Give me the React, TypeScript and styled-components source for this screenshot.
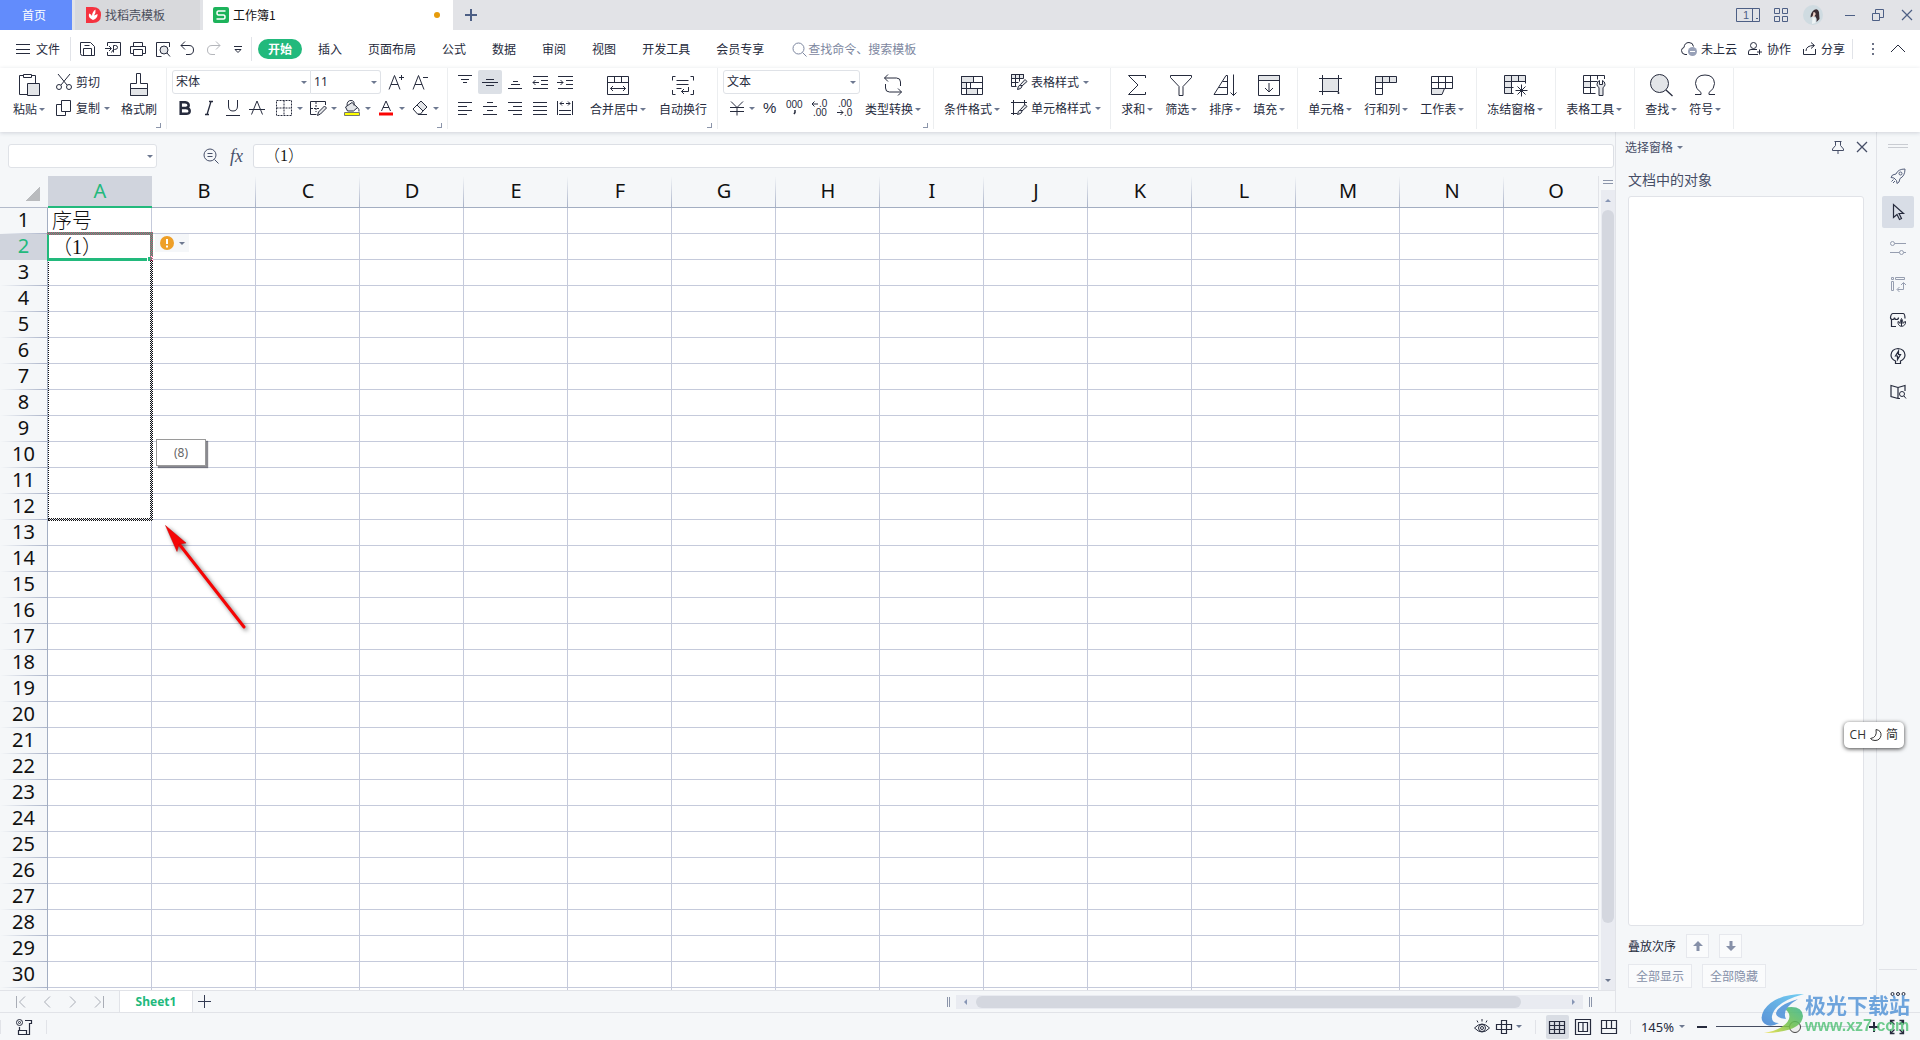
import React from 'react';
import styled, { createGlobalStyle, css } from 'styled-components';

const ink = '#262b3d';
const shade = '#e3e5e8';
const muted = '#8690a8';
const line = '#e1e3e8';
const green = '#22b97c';
const surface = '#f5f7f9';
const sans = '"Noto Sans", "Noto Sans CJK SC", sans-serif';
const cjk = '"Noto Sans CJK SC", "Noto Sans", sans-serif';

const GlobalStyle = createGlobalStyle`
  *, *::before, *::after { box-sizing: border-box; }
  body { margin: 0; font: 12px/16px ${cjk}; color: ${ink}; background: ${surface}; overflow: hidden; }
  button, input, select { font: inherit; color: inherit; margin: 0; padding: 0; border: 0; background: none; border-radius: 0; outline: none; }
  button { white-space: nowrap; }
  svg { display: block; flex: none; }
`;

/* ---------- primitives ---------- */

const Svg = styled.svg`
  fill: none;
  stroke: currentColor;
  stroke-width: 1;
  overflow: visible;
`;

type IconProps = { w?: number; h?: number; children: React.ReactNode };
const Icon = ({ w = 16, h, children }: IconProps) => (
  <Svg width={w} height={h ?? w} viewBox={`0 0 ${w} ${h ?? w}`} aria-hidden="true">{children}</Svg>
);

const Caret = styled.span<{ $dir?: 'up' | 'down' | 'left' | 'right' }>`
  flex: none;
  width: 0;
  height: 0;
  border: 3px solid transparent;
  ${({ $dir = 'down' }) =>
    ({
      down: css`border-top-color: #6d7890; border-bottom-width: 0;`,
      up: css`border-bottom-color: #8796b5; border-top-width: 0;`,
      left: css`border-right-color: #8796b5; border-left-width: 0;`,
      right: css`border-left-color: #8796b5; border-right-width: 0;`,
    })[$dir]}
`;

const Spacer = styled.div`flex: 1;`;

const Rule = styled.span<{ $h?: number; $mx?: number }>`
  flex: none;
  width: 1px;
  height: ${({ $h = 20 }) => $h}px;
  margin: 0 ${({ $mx = 0 }) => $mx}px;
  background: ${line};
`;

/* ---------- shell ---------- */

const Shell = styled.div`
  position: relative;
  display: flex;
  flex-direction: column;
  height: 100vh;
`;

/* ---------- title bar ---------- */

const TitleBar = styled.header`
  display: flex;
  align-items: center;
  gap: 3px;
  height: 30px;
  background: #e2e3e7;
`;

const HomeTab = styled.button`
  width: 72px;
  height: 30px;
  padding-right: 4px;
  color: #fff;
  background: #628cfc;
`;

const DocTab = styled.button<{ $active?: boolean }>`
  display: flex;
  align-items: center;
  gap: 4px;
  width: ${({ $active }) => ($active ? 250 : 125)}px;
  height: 30px;
  padding: 0 13px 0 10px;
  color: ${({ $active }) => ($active ? '#111' : '#4b4f5c')};
  background: ${({ $active }) => ($active ? '#fff' : '#d8d9dc')};
`;

const Dirty = styled.span`
  width: 6px;
  height: 6px;
  border-radius: 50%;
  background: #e69b0b;
`;

const TitleButton = styled.button<{ $w: number }>`
  display: flex;
  align-items: center;
  justify-content: center;
  width: ${({ $w }) => $w}px;
  height: 30px;
  color: #4d5f85;
`;

/* ---------- menu row ---------- */

const MenuRow = styled.nav`
  display: flex;
  align-items: center;
  height: 38px;
  padding: 0 10px 0 16px;
  background: #fff;
`;

const FileButton = styled.button`
  display: flex;
  align-items: center;
  gap: 6px;
  margin-right: 10px;
`;

const QuickTools = styled.div`
  display: flex;
  align-items: center;
  width: 180px;
  padding-left: 4px;
`;

const QuickButton = styled.button<{ $dim?: boolean }>`
  display: flex;
  align-items: center;
  justify-content: center;
  width: 25px;
  height: 24px;
  color: ${({ $dim }) => ($dim ? '#b4b6bb' : ink)};
`;

const StartTab = styled.button`
  height: 20px;
  margin: 0 3px 0 6px;
  padding: 0 10px;
  border-radius: 10px;
  color: #fff;
  font-weight: 700;
  background: ${green};
`;

const MenuTab = styled.button`padding: 0 13px;`;

const SearchBox = styled.label`
  display: flex;
  align-items: center;
  gap: 1px;
  margin-left: 15px;
  color: #7d87a0;
  input { width: 140px; height: 20px; padding-bottom: 2px; }
  input::placeholder { color: #7d87a0; opacity: 1; }
`;

const MenuAction = styled.button`
  display: flex;
  align-items: center;
  gap: 4px;
  margin-left: 10px;
`;

/* ---------- ribbon ---------- */

const Ribbon = styled.section`
  position: relative;
  z-index: 5;
  display: flex;
  height: 64px;
  padding-bottom: 3px;
  background: #fff;
  box-shadow: 0 1px 4px rgba(40, 50, 80, 0.18);
`;

const Group = styled.div<{ $launcher?: boolean; $pl?: number; $pr?: number; $gap?: number }>`
  position: relative;
  display: flex;
  gap: ${({ $gap = 12 }) => $gap}px;
  padding: 0 ${({ $pr = 12 }) => $pr}px 0 ${({ $pl = 10 }) => $pl}px;
  border-right: 1px solid #eceef0;
  ${({ $launcher }) =>
    $launcher &&
    css`
      &::after {
        content: '';
        position: absolute;
        right: 5px;
        bottom: 1px;
        width: 5px;
        height: 5px;
        border: solid #8b95aa;
        border-width: 0 1px 1px 0;
      }
    `}
`;

const BigButton = styled.button`
  display: flex;
  flex-direction: column;
  align-items: center;
  gap: 4px;
  padding-top: 5px;
`;

const Label = styled.span`
  display: flex;
  align-items: center;
  gap: 2px;
`;

const Stack = styled.div`
  display: flex;
  flex-direction: column;
  gap: 2px;
  padding-top: 2px;
`;

const Row = styled.div<{ $gap?: number; $pl?: number }>`
  display: flex;
  align-items: center;
  gap: ${({ $gap = 0 }) => $gap}px;
  height: 24px;
  padding-left: ${({ $pl = 0 }) => $pl}px;
`;

const TextButton = styled.button`
  display: flex;
  align-items: center;
  gap: 4px;
  height: 24px;
`;

const IconButton = styled.button<{ $on?: boolean }>`
  display: flex;
  align-items: center;
  justify-content: center;
  width: 24px;
  height: 24px;
  border-radius: 2px;
  background: ${({ $on }) => ($on ? '#dce0e6' : 'transparent')};
`;

const SplitButton = styled.button`
  display: flex;
  align-items: center;
  gap: 5px;
  width: 34px;
  height: 24px;
  padding-left: 7px;
`;

const SelectBox = styled.span<{ $w: number; $join?: 'left' | 'right' }>`
  display: flex;
  align-items: center;
  width: ${({ $w }) => $w}px;
  height: 24px;
  padding-right: 3px;
  border: 1px solid #dfe2e7;
  border-radius: ${({ $join }) => ($join === 'left' ? '3px 0 0 3px' : $join === 'right' ? '0 3px 3px 0' : '3px')};
  ${({ $join }) => $join === 'right' && css`border-left: 0;`}
  background: #fff;
  select, input { flex: 1; min-width: 0; height: 22px; padding-left: 3px; appearance: none; font-family: ${sans}; }
`;

const Glyph = styled.text`
  fill: currentColor;
  stroke: none;
  font-family: "Liberation Sans", sans-serif;
`;

/* ---------- workspace ---------- */

const Workspace = styled.main`
  display: flex;
  flex: 1;
  min-height: 0;
`;

const Editor = styled.section`
  display: flex;
  flex: 1;
  flex-direction: column;
  min-width: 0;
`;

const FormulaRow = styled.div`
  display: flex;
  align-items: center;
  height: 44px;
  padding: 4px 1px 0 8px;
  color: #47506a;
`;

const FormulaTools = styled.div`
  display: flex;
  align-items: center;
  justify-content: flex-end;
  gap: 11px;
  width: 96px;
  padding-right: 10px;
`;

const Fx = styled.button`
  font: italic 18px/20px "Liberation Serif", serif;
`;

const FormulaInput = styled.input`
  flex: 1;
  min-width: 0;
  height: 24px;
  padding: 0 0 4px 10px;
  border: 1px solid #dcdfe5;
  border-radius: 3px;
  color: #111;
  font: 300 16px/20px "Liberation Serif", "Noto Sans CJK SC", serif;
  background: #fff;
`;

const GridArea = styled.div`
  display: flex;
  flex: 1;
  min-height: 0;
`;

const Viewport = styled.div`
  position: relative;
  flex: 1;
  min-width: 0;
  overflow: hidden;
`;

const Sheet = styled.table`
  width: 1608px;
  table-layout: fixed;
  border-spacing: 0;
  font: 20px/23px ${sans};
  color: #111;
`;

const Corner = styled.th`
  width: 48px;
  height: 32px;
  padding: 0;
  border-bottom: 1px solid #b3bbcb;
`;

const CornerMark = styled.div`
  margin: 4px 0 0 25px;
  width: 15px;
  height: 15px;
  background: linear-gradient(135deg, transparent 50%, #b9bbbe 50%);
`;

const ColHead = styled.th<{ $on?: boolean }>`
  width: 104px;
  height: 32px;
  padding: 0 0 2px;
  font-weight: 400;
  border-bottom: 1px solid #a3aec2;
  background: linear-gradient(transparent, #a9b2c8) right / 1px 100% no-repeat;
  ${({ $on }) => $on && css`color: ${green}; background: #d0d4dd; border-bottom: 2px solid ${green};`}
`;

const RowHead = styled.th<{ $on?: boolean }>`
  height: 26px;
  padding: 0;
  font-weight: 400;
  vertical-align: top;
  border-right: 1px solid #a3aec2;
  background: linear-gradient(90deg, transparent, #a9b2c8) bottom / 100% 1px no-repeat;
  ${({ $on }) => $on && css`color: ${green}; background: #d0d4dd;`}
`;

const Cell = styled.td`
  position: relative;
  height: 26px;
  padding: 2px 0 0 4px;
  white-space: nowrap;
  font: 300 20px/23px "Liberation Serif", "Noto Sans CJK SC", serif;
  border: solid #c5cadb;
  border-width: 0 1px 1px 0;
  background: #fff;
`;

const Selected = styled.div`
  position: absolute;
  z-index: 2;
  left: -1px;
  top: -2px;
  width: 106px;
  height: 29px;
  border: solid ${green};
  border-width: 3px 3px 3px 2px;
  &::after {
    content: '';
    position: absolute;
    right: -3px;
    bottom: -4px;
    width: 6px;
    height: 6px;
    border: 1px solid #fff;
    background: ${green};
  }
`;

const checker = (a: string) => css`
  background-image: repeating-conic-gradient(${a} 0 25%, transparent 0 50%);
  background-size: 2px 2px;
`;

const FillRange = styled.div`
  position: absolute;
  z-index: 3;
  left: 0;
  top: -2px;
  width: 105px;
  height: 289px;
  &::before, &::after { content: ''; position: absolute; ${checker('#111')} }
  &::before { right: 0; top: 28px; bottom: 3px; width: 3px; }
  &::after { left: 0; right: 0; bottom: 0; height: 3px; }
`;

const FillEdge = styled.div`
  position: absolute;
  z-index: 3;
  left: 0;
  top: 27px;
  width: 1px;
  height: 260px;
  ${checker('#111')}
`;

const FillSource = styled.div`
  position: absolute;
  z-index: 3;
  left: -1px;
  top: -2px;
  width: 106px;
  height: 29px;
  &::before, &::after { content: ''; position: absolute; ${checker('#e03c78')} }
  &::before { left: 0; right: 0; top: 0; height: 3px; }
  &::after { right: 0; top: 3px; bottom: 0; width: 3px; }
`;

const ErrorMenu = styled.button`
  position: absolute;
  z-index: 2;
  left: 3px;
  top: 0;
  display: flex;
  align-items: center;
  gap: 5px;
  height: 18px;
  padding: 0 4px 0 5px;
  background: ${surface};
`;

const FillTip = styled.div`
  position: absolute;
  z-index: 2;
  left: 4px;
  top: -3px;
  width: 50px;
  height: 27px;
  border: 1px solid #9a9a9a;
  color: #666;
  font: 12px/25px ${sans};
  text-align: center;
  background: #fff;
  box-shadow: 2px 2px 1px rgba(60, 60, 70, 0.6);
`;

const Pointer = styled.div`
  position: absolute;
  z-index: 4;
  left: 160px;
  top: 344px;
  filter: drop-shadow(2px 2px 2px rgba(0, 0, 0, 0.55));
`;

const VScroll = styled.div`
  display: flex;
  flex-direction: column;
  width: 17px;
  padding-left: 2px;
  border-left: 1px solid ${line};
`;

const VSplit = styled.div`
  width: 10px;
  height: 4px;
  margin: 4px 0 6px 2px;
  border: solid #8b95aa;
  border-width: 1px 0;
`;

const VTrack = styled.div`
  display: flex;
  flex: 1;
  flex-direction: column;
  align-items: center;
  background: #e9ebf1;
`;

const ScrollArrow = styled.button<{ $vertical?: boolean }>`
  display: flex;
  flex: none;
  align-items: center;
  justify-content: center;
  width: ${({ $vertical }) => ($vertical ? 14 : 20)}px;
  height: ${({ $vertical }) => ($vertical ? 20 : 14)}px;
`;

const Thumb = styled.div<{ $share: number; $vertical?: boolean }>`
  flex: ${({ $share }) => $share};
  ${({ $vertical }) => ($vertical ? css`width: 12px;` : css`height: 12px;`)}
  border-radius: 6px;
  background: #d4d7df;
`;

/* ---------- sheet tabs ---------- */

const SheetBar = styled.div`
  display: flex;
  align-items: center;
  height: 22px;
  padding: 0 23px 0 8px;
  border-top: 1px solid ${line};
`;

const NavButton = styled.button`
  display: flex;
  align-items: center;
  justify-content: center;
  width: 26px;
  height: 20px;
  color: #a9adb6;
`;

const SheetTab = styled.button`
  width: 74px;
  height: 21px;
  margin: 0 2px 0 7px;
  border: solid ${line};
  border-width: 0 1px;
  color: ${green};
  font: 700 12px/20px ${sans};
  background: #fff;
`;

const AddSheet = styled(NavButton)`
  width: 18px;
  color: #333a52;
`;

const HScroll = styled.div`
  display: flex;
  flex: none;
  width: calc(41% - 4px);
  align-items: center;
  justify-content: space-between;
  gap: 6px;
`;

const HSplit = styled.span`
  width: 3px;
  height: 10px;
  border: solid #8b95aa;
  border-width: 0 1px;
`;

const HTrack = styled.div`
  display: flex;
  flex: 1;
  align-items: center;
  height: 14px;
  background: #e9ebf1;
`;

/* ---------- selection pane ---------- */

const Pane = styled.aside`
  display: flex;
  flex-direction: column;
  width: 261px;
  padding: 7px 12px 24px;
  border-left: 1px solid ${line};
`;

const PaneHead = styled.div`
  display: flex;
  align-items: center;
  gap: 12px;
  height: 16px;
  margin: 0 -3px;
  color: #454d66;
`;

const PaneTitle = styled.h2`
  margin: 9px 0 7px;
  padding-top: 5px;
  font: 400 14px/20px ${cjk};
  color: #454d66;
`;

const PlainButton = styled.button`
  display: flex;
  align-items: center;
  gap: 4px;
`;

const ObjectList = styled.div`
  flex: 1;
  margin-bottom: 8px;
  border: 1px solid ${line};
  border-radius: 3px;
  background: #fff;
`;

const OrderRow = styled.div<{ $mb?: number }>`
  display: flex;
  align-items: center;
  gap: 10px;
  margin-bottom: ${({ $mb = 0 }) => $mb}px;
`;

const PaneButton = styled.button<{ $w: number }>`
  display: flex;
  align-items: center;
  justify-content: center;
  width: ${({ $w }) => $w}px;
  height: 24px;
  border: 1px solid #e6e8ed;
  color: ${muted};
  background: #fafbfc;
`;

const ToolRail = styled.aside`
  display: flex;
  flex-direction: column;
  align-items: center;
  width: 44px;
  padding: 12px 2px 15px 0;
  border-left: 1px solid ${line};
`;

const Grip = styled.span`
  width: 20px;
  height: 4px;
  margin-bottom: 12px;
  border: solid #c9ccd2;
  border-width: 1px 0;
`;

const RailButton = styled.button<{ $on?: boolean; $tone?: string }>`
  display: flex;
  align-items: center;
  justify-content: center;
  width: 32px;
  height: 32px;
  margin-bottom: 4px;
  border-radius: 2px;
  color: ${({ $tone = ink }) => $tone};
  background: ${({ $on }) => ($on ? '#d8dde6' : 'transparent')};
`;

const RailRule = styled.span`
  width: 38px;
  height: 1px;
  margin-bottom: 21px;
  background: ${line};
`;

/* ---------- status bar ---------- */

const StatusBar = styled.footer`
  display: flex;
  align-items: center;
  height: 28px;
  padding: 0 11px 0 0;
  border-top: 1px solid ${line};
`;

const StatusButton = styled.button<{ $w: number; $on?: boolean }>`
  display: flex;
  align-items: center;
  justify-content: center;
  gap: 4px;
  width: ${({ $w }) => $w}px;
  height: 24px;
  border-radius: 2px;
  background: ${({ $on }) => ($on ? '#d9dde4' : 'transparent')};
`;

const Views = styled.div`
  display: flex;
  gap: 3px;
  margin-right: 9px;
`;

const ZoomLabel = styled.button`
  display: flex;
  align-items: center;
  gap: 5px;
  margin: 0 7px 0 10px;
  font: 13px/16px ${sans};
`;

const ZoomSlider = styled.input`
  appearance: none;
  width: 144px;
  height: 14px;
  margin: 0 4px;
  background: linear-gradient(90deg, #454c60 55%, #c9cdd6 55%) center / 100% 1px no-repeat;
  &::-webkit-slider-thumb {
    appearance: none;
    width: 12px;
    height: 12px;
    border: 1px solid #444;
    border-radius: 50%;
    background: #eee;
  }
`;

/* ---------- floating layers ---------- */

const ImeBadge = styled.div`
  position: absolute;
  z-index: 8;
  right: 16px;
  bottom: 292px;
  display: flex;
  align-items: center;
  gap: 4px;
  height: 26px;
  padding: 0 6px;
  border-radius: 5px;
  color: #333;
  font: 12px/16px "Open Sans", "Noto Sans CJK SC", sans-serif;
  background: #fff;
  box-shadow: 0 1px 4px rgba(0, 0, 0, 0.75);
`;

const SiteMark = styled.div`
  position: absolute;
  z-index: 9;
  right: 10px;
  bottom: 4px;
  display: flex;
  align-items: center;
  opacity: 0.85;
  pointer-events: none;
`;

const SiteText = styled.div`
  display: flex;
  flex-direction: column;
  color: #5796d8;
  font: 700 21px/24px ${cjk};
`;

const SiteUrl = styled.span`
  color: #58c47c;
  font: 700 16px/20px "Liberation Sans", sans-serif;
`;

/* ---------- large ribbon icons ---------- */

const PasteIcon = () => (
  <Icon w={24}><path d="M10.5 21.5h-8v-19h4M14.5 2.5h4v8" /><path d="M6.5 1.5h8v3h-8z" /><path fill={shade} d="M10.5 10.5h12v12h-12z" /></Icon>
);
const BrushIcon = () => (
  <Icon w={24}><path d="M9.5.5h4v10h7v12h-17v-12h6z" /><path fill={shade} d="M3.5 15.5h17v7h-17z" /></Icon>
);
const MergeIcon = () => (
  <Icon w={24}><path d="M1.5 3.5h21v18h-21zM1.5 9.5h21M8.5 3.5v6M15.5 3.5v6M4.5 15.5h15M7 13l-2.500 2.500L7 18M17 13l2.500 2.500L17 18" /></Icon>
);
const WrapIcon = () => (
  <Icon w={24}><path d="M4.500 3.500h-3v4M1.500 17v4.500h3M19.500 3.500h3v4M22.500 17v4.500h-3M5.500 7.500h12M5.500 11.500h12M5.500 15.500h5M17.500 14v4.500h-7M13 16l-2.500 2.500L13 21" /></Icon>
);
const ConvertIcon = () => (
  <Icon w={24}><path d="M7 1.500l-3.500 3.500L7 8.500M3.500 5h12q4 0 4 4v4M4.500 11v4q0 4 4 4h12M17 15.500l3.500 3.500-3.500 3.500" /></Icon>
);
const CondIcon = () => (
  <Icon w={24}><path fill={shade} d="M1.500 3.500h12v6h-12zM1.500 9.500h5v6h-5zM6.500 15.500h11v6h-11z" /><path d="M1.500 3.500h21v18h-21zM13.500 3.500v6h9M10.500 9.500v6h12M6.500 9.500h5" /></Icon>
);
const SumIcon = () => <Icon w={24}><path d="M20.500 5v-2.500h-17L13 12l-9.500 9.500h17V19" /></Icon>;
const FilterIcon = () => <Icon w={24}><path d="M1.500 2.500h21v2l-8.500 9v9h-4v-9l-8.500-9z" /></Icon>;
const SortIcon = () => (
  <Icon w={24}><path d="M1 21.500h13.500V2.500h-1.500zM9.500 8.500h5M5.500 14.500h9" /><path d="M20.500 1.500v21M17.500 19.500l3 3 3-3" /></Icon>
);
const FillIcon = () => (
  <Icon w={24}><path fill={shade} d="M1.500 2.500h21v5h-21z" /><path d="M1.500 2.500h21v20h-21zM12 10v9M8 15l4 4 4-4" /></Icon>
);
const CellIcon = () => (
  <Icon w={24}><path fill={shade} d="M4.500 5.500h16v13h-16z" /><path d="M1 5.500h23M4.500 2v20M20.500 2v14M1 18.500h17" /><path d="M20.500 19v2M19.500 20h2" /></Icon>
);
const RowColIcon = () => (
  <Icon w={24}><path fill={shade} d="M1.500 3.500h21v6h-21z" /><path d="M1.500 3.500v18h7v-18M15.500 3.500v6M1.500 15.500h7" /></Icon>
);
const SheetIcon = () => (
  <Icon w={24}><path d="M1.500 3.500h21v12h-21zM1.500 9.500h21M8.500 3.500v12M15.500 3.500v12" /><path fill={shade} d="M1.500 15.500h13l-2.500 6h-10.500z" /></Icon>
);
const FreezeIcon = () => (
  <Icon w={24}><path stroke="none" fill={shade} d="M1.500 2.500h21v6h-14v12h-7z" /><path d="M10.500 20.500h-9v-18h21v8M8.500 2.500v18M15.500 2.500v6M1.500 8.500h21M1.500 14.500h9" /><path d="M18.500 11.500v12M12.500 17.500h12M14.500 13.500l8 8M22.500 13.500l-8 8" /></Icon>
);
const ToolsIcon = () => (
  <Icon w={24}><path stroke="none" fill={shade} d="M1.500 8.500h7v6h-7z" /><path d="M22.500 6V2.500h-21v18h12M1.500 8.500h14M8.500 2.500v18M15.500 2.500v4M1.500 14.500h12" /><path fill={shade} d="M17.500 7.500q-2.500 1-2.500 4 0 2 2 3v8h4v-8q2-1 2-3 0-3-2.500-4v4h-3z" /></Icon>
);
const FindIcon = () => <Icon w={24}><circle cx="10.500" cy="10.500" r="9" fill={shade} /><path strokeWidth="1.300" d="M17 17l6.500 6" /></Icon>;
const OmegaIcon = () => <Icon w={24}><path d="M2 21.500h6v-2Q2.500 16 2.500 10.500 3 2 12 2t9.500 8.500q0 5.500-5.500 9v2h6" /></Icon>;

/* ---------- data ---------- */

const menuTabs = ['插入', '页面布局', '公式', '数据', '审阅', '视图', '开发工具', '会员专享'];
const columns = 'ABCDEFGHIJKLMNO'.split('');
const lastLabelledRow = 30;
const rows = Array.from({ length: lastLabelledRow + 1 }, (_, i) => i + 1);

const Big = ({ icon, text, menu = true }: { icon: React.ReactNode; text: string; menu?: boolean }) => (
  <BigButton>{icon}<Label>{text}{menu && <Caret />}</Label></BigButton>
);

const alignRows: [string, string][][] = [
  [
    ['顶端对齐', 'M1 1.500h14M4 5.500h8M6 8.500h4'],
    ['垂直居中', 'M4 5.500h8M0 8.500h16M4 11.500h8'],
    ['底端对齐', 'M6 7.500h5M4 10.500h9M1 14.500h14'],
    ['减少缩进', 'M1 2.500h15M9 6.500h7M9 10.500h7M1 14.500h15M1 8.500h6M3.500 6L1 8.500 3.500 11'],
    ['增加缩进', 'M1 2.500h15M9 6.500h7M9 10.500h7M1 14.500h15M0 8.500h6M3.500 6L6 8.500 3.500 11'],
  ],
  [
    ['左对齐', 'M1 2.500h14M1 6.500h9M1 10.500h14M1 14.500h9'],
    ['居中', 'M5 2.500h6M1 6.500h14M5 10.500h6M1 14.500h14'],
    ['右对齐', 'M1 2.500h14M6 6.500h9M1 10.500h14M6 14.500h9'],
    ['两端对齐', 'M1 2.500h14M1 6.500h14M1 10.500h14M1 14.500h14'],
    ['分散对齐', 'M.500 1v14M15.500 1v14M2 10.500h12M2 14.500h12M3 3.500h4M9 3.500h4M5 1.500L3 3.500 5 5.500M11 1.500l2 2-2 2'],
  ],
];

/* ---------- sections ---------- */

const Title = () => (
  <TitleBar>
    <HomeTab>首页</HomeTab>
    <DocTab>
      <Icon w={16}><path stroke="none" fill="#f5333f" d="M1 0h6.500Q16 0 16 8t-8.500 8H1z" /><path stroke="none" fill="#fff" d="M8 13Q3 11 4 6.500 6.500 7 7 9 7 5 10.500 2.500 11 6 9 8.500L12.500 7Q13 11 8 13z" /></Icon>
      找稻壳模板
    </DocTab>
    <DocTab $active>
      <Icon w={16}><rect stroke="none" fill="#1db35b" width="16" height="16" rx="2" /><path stroke="#fff" strokeWidth="1.500" d="M12.500 4H5.500Q4 4 4 6t1.500 2h5Q12 8 12 10t-1.500 2H3.500" /></Icon>
      工作簿1<Spacer /><Dirty />
    </DocTab>
    <TitleButton $w={30} aria-label="新建"><Icon w={12}><path strokeWidth="2" d="M6 0v12M0 6h12" /></Icon></TitleButton>
    <Spacer />
    <TitleButton $w={30} aria-label="窗口">
      <Icon w={24} h={14}><path d="M.500.500h23v13H.500zM16.500.500v13M20 10.500h2" /><Glyph x="7" y="11" fontSize="11">1</Glyph></Icon>
    </TitleButton>
    <TitleButton $w={30} aria-label="应用"><Icon w={14}><path d="M.500.500h5v5h-5zM8.500.500h5v5h-5zM.500 8.500h5v5h-5zM8.500 8.500h5v5h-5z" /></Icon></TitleButton>
    <TitleButton $w={28} aria-label="账号">
      <Icon w={20}><circle cx="10" cy="10" r="10" stroke="none" fill="#cfdbe1" /><path stroke="none" fill="#3a2c33" d="M11 5Q15 3 16 7l.5 7-3 3q.5-4-1-5.500L10 11l-2.500 1.500q0-5 3.500-7.500z" /><path stroke="none" fill="#ecd0c6" d="M10.500 7q2.500 0 2 2.500L11 12H9.500z" /><path stroke="none" fill="#eef3f5" d="M9.500 12l3 1v5L9 19z" /></Icon>
    </TitleButton>
    <Rule $mx={2} />
    <TitleButton $w={24} aria-label="最小化"><Icon w={10}><path d="M0 5.500h10" /></Icon></TitleButton>
    <TitleButton $w={26} aria-label="还原"><Icon w={12}><path d="M.500 4.500h7v7h-7zM3.500 4V.500h8v8H8" /></Icon></TitleButton>
    <TitleButton $w={26} aria-label="关闭"><Icon w={10}><path strokeWidth="1.200" d="M0 0l10 10M10 0L0 10" /></Icon></TitleButton>
  </TitleBar>
);

const Menu = () => (
  <MenuRow>
    <FileButton><Icon w={14}><path d="M0 2.500h14M0 7.500h14M0 11.500h14" /></Icon>文件</FileButton>
    <Rule $h={24} />
    <QuickTools>
      <QuickButton aria-label="保存"><Icon><path d="M2.500 14.500q-2 0-2-2V1.500h10l4 4v9zM3.500 14.500v-7h8v7M4.500 4.500h5" /></Icon></QuickButton>
      <QuickButton aria-label="输出为PDF"><Icon><path d="M2.500 5V1.500h13v13h-13V11M0 7.500h6M4 5l2.500 2.500L4 10M8.500 11.500V4.500h2q2 0 2 2t-3 2q-2 0-3 3" /></Icon></QuickButton>
      <QuickButton aria-label="打印"><Icon><path d="M3.500 5.500v-4h9v4M3.500 12.500h-3v-7h15v7h-3M3.500 8.500h9v6h-9z" /></Icon></QuickButton>
      <QuickButton aria-label="打印预览"><Icon><path d="M14.500 6V1.500h-13v14h5" /><circle cx="9" cy="9" r="4" fill={shade} /><path d="M12 12l3 3.500" /></Icon></QuickButton>
      <QuickButton aria-label="撤销"><Icon><path d="M5 .500l-4 4 4 4M1 4.500h8q4.500 0 4.500 4.500T9 13.500H6" /></Icon></QuickButton>
      <QuickButton $dim aria-label="恢复"><Icon><path d="M11 .500l4 4-4 4M15 4.500H7Q2.500 4.500 2.500 9T7 13.500h3" /></Icon></QuickButton>
      <QuickButton aria-label="自定义"><Icon w={8}><path d="M0 1.500h8M1 4.500l3 3 3-3z" /></Icon></QuickButton>
    </QuickTools>
    <Rule $h={24} />
    <StartTab>开始</StartTab>
    {menuTabs.map((t) => <MenuTab key={t}>{t}</MenuTab>)}
    <SearchBox>
      <Icon w={15}><circle cx="6.500" cy="6.500" r="5.500" /><path d="M10.500 10.500l4 4" /></Icon>
      <input aria-label="搜索" placeholder="查找命令、搜索模板" />
    </SearchBox>
    <Spacer />
    <MenuAction><Icon><path d="M6 13.500H4Q.500 13 .500 9.500.500 7 3 6.500 3.500 1.500 8 1.500q4 0 4.500 4" /><circle cx="11.500" cy="10.500" r="4.500" stroke="none" fill="#98a1b8" /><path stroke="#fff" d="M9 10.500h5" /></Icon>未上云</MenuAction>
    <MenuAction><Icon><circle cx="6.500" cy="4.500" r="3" /><path d="M10 8.500H4q-2.500 0-2.500 2.500v2.500H11M10 11h5M12.500 8.500v5" /></Icon>协作</MenuAction>
    <MenuAction><Icon><path d="M2.500 8v5.500h12V8M5 10q0-5.500 8-5.500M10 1.500l3.500 3-3.500 3" /></Icon>分享</MenuAction>
    <Rule $mx={7} />
    <QuickButton aria-label="更多"><Icon w={12}><path stroke="none" fill="#6c7286" d="M5 0h2v2H5zM5 5h2v2H5zM5 10h2v2H5z" /></Icon></QuickButton>
    <QuickButton aria-label="收起"><Icon w={14}><path d="M0 10l7-7 7 7" /></Icon></QuickButton>
  </MenuRow>
);

const RibbonBar = () => (
  <Ribbon>
    <Group $launcher $pl={13} $pr={9} $gap={11}>
      <Big icon={<PasteIcon />} text="粘贴" />
      <Stack>
        <TextButton><Icon><path d="M2 0l9 11M14 0L5 11" /><circle cx="3" cy="13" r="2.500" /><circle cx="13" cy="13" r="2.500" /></Icon>剪切</TextButton>
        <TextButton><Icon><path d="M5.500.500h9v11h-9zM5.500 4.500h-5v11h9v-4" /></Icon>复制<Caret /></TextButton>
      </Stack>
      <Big icon={<BrushIcon />} text="格式刷" menu={false} />
    </Group>

    <Group $launcher $pl={5} $pr={8}>
      <Stack>
        <Row>
          <SelectBox $w={139} $join="left"><select aria-label="字体"><option>宋体</option></select><Caret /></SelectBox>
          <SelectBox $w={70} $join="right"><select aria-label="字号"><option>11</option></select><Caret /></SelectBox>
          <Row $pl={3}>
            <IconButton aria-label="增大字号"><Icon><path d="M1 15.500L6.500 1.500 12 15.500M3 10.500h7M11 3.500h5M13.500 1v5" /></Icon></IconButton>
            <IconButton aria-label="减小字号"><Icon><path d="M1 15.500L6.500 1.500 12 15.500M3 10.500h7M11 3.500h5" /></Icon></IconButton>
          </Row>
        </Row>
        <Row $pl={1}>
          <IconButton aria-label="加粗"><Icon><path strokeWidth="2.500" d="M3.700 2.300h4.500q3.500.500 3.500 3t-3 2.700H3.700zM3.700 8h5q4 0 4 3t-4 2.700h-5z" /></Icon></IconButton>
          <IconButton aria-label="倾斜"><Icon><path strokeWidth="1.300" d="M8 1.500h4M4 14.500h4M10 1.500l-4 13" /></Icon></IconButton>
          <IconButton aria-label="下划线"><Icon><path d="M3.500 0v6q0 5 4.500 5t4.500-5V0M1 15.500h14" /></Icon></IconButton>
          <IconButton aria-label="删除线"><Icon><path d="M2.500 14.500L8 1l5.500 13.500M0 9.500h16" /></Icon></IconButton>
          <SplitButton aria-label="边框"><Icon><path strokeDasharray="2 1" d="M.500.500h15v15H.500zM8 .500v15M.500 8h15" /></Icon><Caret /></SplitButton>
          <SplitButton aria-label="绘图边框"><Icon><path d="M15.500 5V1.500H.500v13h6" /><path strokeDasharray="2 1" d="M6 2v10M1 8.500h9" /><path fill={shade} d="M7.500 15.500l1-3.500 6-6 2 2-6 6z" /></Icon><Caret /></SplitButton>
          <SplitButton aria-label="填充颜色"><Icon><path fill={shade} d="M8 2.500l5.500 5-4 3.500h-6L1.500 7z" /><path d="M3 5.500q0-5 4-5t3 5M13.500 7.500q2 2 1.500 4" /><path stroke="#77796b" fill="#ff0" d="M.500 12.500h15v3H.500z" /></Icon><Caret /></SplitButton>
          <SplitButton aria-label="字体颜色"><Icon><path d="M3.500 11L8 1l4.500 10M5 7.500h6" /><path stroke="none" fill="#fb0404" d="M1 12.500h14v3H1z" /></Icon><Caret /></SplitButton>
          <SplitButton aria-label="清除"><Icon><path fill={shade} d="M5 5l4-4 6 6-4 4z" /><path d="M5 5L1 9l4.500 5h3L11 11M6 14.500h9" /></Icon><Caret /></SplitButton>
        </Row>
      </Stack>
    </Group>

    <Group $launcher $pl={5} $pr={10} $gap={13}>
      <Stack>
        {alignRows.map((row, r) => (
          <Row key={r} $gap={1}>
            {row.map(([name, d]) => (
              <IconButton key={name} aria-label={name} $on={name === '垂直居中'}><Icon><path d={d} /></Icon></IconButton>
            ))}
          </Row>
        ))}
      </Stack>
      <Big icon={<MergeIcon />} text="合并居中" />
      <Big icon={<WrapIcon />} text="自动换行" menu={false} />
    </Group>

    <Group $launcher $pl={5} $pr={12} $gap={5}>
      <Stack>
        <SelectBox $w={137}><select aria-label="数字格式"><option>文本</option></select><Caret /></SelectBox>
        <Row $gap={1}>
          <SplitButton aria-label="货币"><Icon w={14}><path d="M1 .500l6 6 6-6M7 6.500v8M0 6.500h14M0 10.500h14" /></Icon><Caret /></SplitButton>
          <IconButton aria-label="百分比"><Icon w={18}><Glyph x="2" y="14" fontSize="15">%</Glyph></Icon></IconButton>
          <IconButton aria-label="千位分隔"><Icon w={18}><Glyph x="0" y="9" fontSize="10">000</Glyph><path strokeWidth="1.500" d="M9 11v2.500l-1 1.500" /></Icon></IconButton>
          <IconButton aria-label="增加小数位"><Icon w={18}><path d="M1 5h6M3.500 2.500L1 5l2.500 2.500" /><Glyph x="8" y="8" fontSize="10">.0</Glyph><Glyph x="2" y="17" fontSize="10">.00</Glyph></Icon></IconButton>
          <IconButton aria-label="减少小数位"><Icon w={18}><path d="M1 13.500h6M4.500 11L7 13.500 4.500 16" /><Glyph x="2" y="8" fontSize="10">.00</Glyph><Glyph x="8" y="17" fontSize="10">.0</Glyph></Icon></IconButton>
        </Row>
      </Stack>
      <Big icon={<ConvertIcon />} text="类型转换" />
    </Group>

    <Group $gap={11} $pr={9}>
      <Big icon={<CondIcon />} text="条件格式" />
      <Stack>
        <TextButton><Icon><path fill={shade} d="M.500.500h12v4H.500z" /><path d="M12.500 4V.500H.500v12h5M.500 8.500h7M4.500.500v12M8.500.500v7" /><path fill={shade} d="M9.500 10.500l4.500-5 2 2-5 4.500zM9 11q-2 .500-2.500 4.500 4-.5 4.500-3z" /></Icon>表格样式<Caret /></TextButton>
        <TextButton><Icon><path d="M0 2.500h16M2.500 0v15M13.500 0v5M0 13.500h6" /><path fill={shade} d="M9.500 9.500l4.500-5 2 2-5 4.500zM9 10q-2 .500-2.500 4.500 4-.5 4.500-3z" /></Icon>单元格样式<Caret /></TextButton>
      </Stack>
    </Group>

    <Group>
      <Big icon={<SumIcon />} text="求和" />
      <Big icon={<FilterIcon />} text="筛选" />
      <Big icon={<SortIcon />} text="排序" />
      <Big icon={<FillIcon />} text="填充" />
    </Group>
    <Group>
      <Big icon={<CellIcon />} text="单元格" />
      <Big icon={<RowColIcon />} text="行和列" />
      <Big icon={<SheetIcon />} text="工作表" />
    </Group>
    <Group><Big icon={<FreezeIcon />} text="冻结窗格" /></Group>
    <Group><Big icon={<ToolsIcon />} text="表格工具" /></Group>
    <Group>
      <Big icon={<FindIcon />} text="查找" />
      <Big icon={<OmegaIcon />} text="符号" />
    </Group>
  </Ribbon>
);

const Grid = () => (
  <Viewport>
    <Sheet>
      <thead>
        <tr>
          <Corner><CornerMark /></Corner>
          {columns.map((c) => <ColHead key={c} scope="col" $on={c === 'A'}>{c}</ColHead>)}
        </tr>
      </thead>
      <tbody>
        {rows.map((r) => (
          <tr key={r}>
            <RowHead scope="row" $on={r === 2}>{r <= lastLabelledRow && r}</RowHead>
            {columns.map((c) => (
              <Cell key={c}>
                {c + r === 'A1' && '序号'}
                {c + r === 'A2' && <>（1）<Selected /><FillRange /><FillEdge /><FillSource /></>}
                {c + r === 'B2' && (
                  <ErrorMenu aria-label="错误检查">
                    <Icon w={14}><circle cx="7" cy="7" r="7" stroke="none" fill="#ee9f27" /><path stroke="#fff" strokeWidth="2" d="M7 3v5M7 9.500v2" /></Icon>
                    <Caret />
                  </ErrorMenu>
                )}
                {c + r === 'B10' && <FillTip>(8)</FillTip>}
              </Cell>
            ))}
          </tr>
        ))}
      </tbody>
    </Sheet>
    <Pointer>
      <Icon w={96} h={112}><path stroke="#f50505" strokeWidth="3" strokeLinecap="round" d="M16 20l68 87" /><path stroke="#c00" strokeWidth=".5" fill="#f50505" d="M5.500 5.500L26 23l-7 1-2 7.500z" /></Icon>
    </Pointer>
  </Viewport>
);

const SelectionPane = () => (
  <Pane>
    <PaneHead>
      <PlainButton>选择窗格<Caret /></PlainButton>
      <Spacer />
      <PlainButton aria-label="固定"><Icon w={14}><path d="M3.500 1.500h7M4.500 1.500v4L1.500 9v1.500h11V9l-3-3.500v-4M7 10.500V14" /></Icon></PlainButton>
      <PlainButton aria-label="关闭"><Icon w={10}><path strokeWidth="1.300" d="M0 0l10 10M10 0L0 10" /></Icon></PlainButton>
    </PaneHead>
    <PaneTitle>文档中的对象</PaneTitle>
    <ObjectList role="listbox" aria-label="文档中的对象" />
    <OrderRow $mb={6}>
      叠放次序
      <PaneButton $w={23} aria-label="上移"><Icon w={10}><path stroke="none" fill={muted} d="M5 0l5 5H6.500v5h-3V5H0z" /></Icon></PaneButton>
      <PaneButton $w={23} aria-label="下移"><Icon w={10}><path stroke="none" fill={muted} d="M5 10l5-5H6.500V0h-3v5H0z" /></Icon></PaneButton>
    </OrderRow>
    <OrderRow>
      <PaneButton $w={64}>全部显示</PaneButton>
      <PaneButton $w={64}>全部隐藏</PaneButton>
    </OrderRow>
  </Pane>
);

const Rail = () => (
  <ToolRail>
    <Grip />
    <RailButton $tone="#56607c" aria-label="快速启动"><Icon><path d="M15 1q-7 0-9 5L2.500 7 1 9.500l3 .5 2.500 2.500.5 3L9 14l1-3.500Q15 8 15 1z" /><circle cx="10.500" cy="5.500" r="1.500" /><path d="M3.500 11.500l-2 2M5 13l-2 2" /></Icon></RailButton>
    <RailButton $on aria-label="选择"><Icon><path strokeWidth="1.200" d="M3.500.500v13l3.500-3 2.500 5 2-1-2.500-5h4.500z" /></Icon></RailButton>
    <RailButton $tone="#969eb0" aria-label="属性"><Icon><circle cx="2.500" cy="3.500" r="2" /><circle cx="11.500" cy="12.500" r="2" /><path d="M4.500 3.500H16M0 12.500h9.500M13.500 12.500H16" /></Icon></RailButton>
    <RailButton $tone="#969eb0" aria-label="行列"><Icon><path d="M1.500 1.500h2v2h-2zM5.500 1.500h9v2h-9zM1.500 5.500h2v9h-2zM13.500 7v6.500h-6M11 9l2.500-2.500L16 9M9.500 11L7 13.500 9.500 16" /></Icon></RailButton>
    <RailButton aria-label="素材"><Icon><path strokeWidth="1.200" d="M1.500 7v7.500H6M3 1.500h10q2 0 2 5M3 1.500q-2 0-2.500 4 0 2 2 2t2-2q0 2 2 2t2-2" /><path d="M11.500 14.500q-4-1-3.500-5 1.500.5 2 2 0-3 1.500-5 1.500 2 1.500 5 .5-1.500 2.500-2 .5 4-4 5zM11.500 8v6" /></Icon></RailButton>
    <RailButton aria-label="灵感"><Icon><path strokeWidth="1.200" d="M5.500 15.500v-2.500Q1 11 1 7q.5-6 7-6.500 6.500.5 7 6.500 0 4-4.500 6v2.500zM8.500 3l-3 5h2v3.500l3-5h-2z" /></Icon></RailButton>
    <RailButton aria-label="查阅"><Icon><path strokeWidth="1.200" d="M8 3.500l-7-2v11l7 2M8 3.500v11M8 3.500l7-2V7M8 14.500h2" /><circle cx="12" cy="10" r="2.500" /><path d="M14 12l2 2.500" /></Icon></RailButton>
    <Spacer />
    <RailRule />
    <Icon w={16} h={6}><circle cx="2.500" cy="3" r="1.500" /><circle cx="8" cy="3" r="1.500" /><circle cx="13.500" cy="3" r="1.500" /></Icon>
  </ToolRail>
);

const Status = () => (
  <StatusBar>
    <Rule $h={14} />
    <StatusButton $w={45} aria-label="录制宏"><Icon><circle cx="3.500" cy="3.500" r="3" /><circle cx="3.500" cy="3.500" r="1" /><path strokeWidth="1.200" d="M9 1.500h6.500v3h-2v11h-11v-4h8v4M3.500 8v3" /></Icon></StatusButton>
    <Rule $h={14} />
    <Spacer />
    <StatusButton $w={22} aria-label="护眼模式"><Icon><path d="M.500 9Q8 1 15.500 9 8 17 .500 9zM8 0v2.500M3 1.500l1 2M13 1.500l-1 2" /><circle cx="8" cy="9" r="3.500" /><circle cx="8" cy="9" r="1.500" /></Icon></StatusButton>
    <StatusButton $w={32} aria-label="阅读模式"><Icon><path strokeWidth="1.200" d="M5.500 1.500h5v13h-5zM.500 5.500h15v5H.500z" /></Icon><Caret /></StatusButton>
    <Rule $h={14} $mx={10} />
    <Views>
      <StatusButton $w={23} $on aria-label="普通视图"><Icon><path strokeWidth="1.200" d="M.500 2.500h15v12H.500zM.500 6.500h15M.500 10.500h15M5.500 2.500v12M10.500 2.500v12" /></Icon></StatusButton>
      <StatusButton $w={23} aria-label="页面布局"><Icon><path strokeWidth="1.200" d="M.500.500h15v15H.500zM3.500 3.500h9v9h-9zM8 3.500v9" /></Icon></StatusButton>
      <StatusButton $w={23} aria-label="分页预览"><Icon><path strokeWidth="1.200" d="M.500 1.500h15v13H.500zM.500 9.500h15M10.500 1.500v8M5.500 1.500v8" /></Icon></StatusButton>
    </Views>
    <Rule $h={14} />
    <ZoomLabel>145%<Caret /></ZoomLabel>
    <StatusButton $w={20} aria-label="缩小"><Icon w={10}><path strokeWidth="2" d="M0 5h10" /></Icon></StatusButton>
    <ZoomSlider type="range" min={0} max={100} defaultValue={55} aria-label="缩放比例" />
    <StatusButton $w={20} aria-label="放大"><Icon w={10}><path strokeWidth="2" d="M0 5h10M5 0v10" /></Icon></StatusButton>
    <StatusButton $w={25} aria-label="全屏"><Icon w={14}><path strokeWidth="1.300" d="M.500 4.500v-4h4M9.500.500h4v4M13.500 9.500v4h-4M4.500 13.500h-4v-4M.500.500l4 4M13.500.500l-4 4M13.500 13.500l-4-4M.500 13.500l4-4" /></Icon></StatusButton>
  </StatusBar>
);

export default function App() {
  return (
    <Shell>
      <GlobalStyle />
      <Title />
      <Menu />
      <RibbonBar />
      <Workspace>
        <Editor>
          <FormulaRow>
            <SelectBox $w={149}><input aria-label="名称框" /><Caret /></SelectBox>
            <FormulaTools>
              <Icon><circle cx="7" cy="7" r="6" /><path d="M11.500 11.500l4 4M4.500 5.500h5M4.500 8.500h5" /></Icon>
              <Fx aria-label="插入函数">fx</Fx>
            </FormulaTools>
            <FormulaInput aria-label="编辑栏" defaultValue="（1）" />
          </FormulaRow>
          <GridArea>
            <Grid />
            <VScroll>
              <VSplit />
              <VTrack>
                <ScrollArrow $vertical aria-label="向上"><Caret $dir="up" /></ScrollArrow>
                <Thumb $vertical $share={15} />
                <Spacer />
                <ScrollArrow $vertical aria-label="向下"><Caret /></ScrollArrow>
              </VTrack>
            </VScroll>
          </GridArea>
          <SheetBar>
            <NavButton aria-label="第一张"><Icon w={12}><path d="M1.500 0v12M10 .500L4.500 6l5.500 5.500" /></Icon></NavButton>
            <NavButton aria-label="上一张"><Icon w={12}><path d="M9 .500L3.500 6 9 11.500" /></Icon></NavButton>
            <NavButton aria-label="下一张"><Icon w={12}><path d="M3 .500L8.500 6 3 11.500" /></Icon></NavButton>
            <NavButton aria-label="最后一张"><Icon w={12}><path d="M10.500 0v12M2 .500L7.500 6 2 11.500" /></Icon></NavButton>
            <SheetTab>Sheet1</SheetTab>
            <AddSheet aria-label="新建工作表"><Icon w={13}><path d="M6.500 0v13M0 6.500h13" /></Icon></AddSheet>
            <Spacer />
            <HScroll>
              <HSplit />
              <HTrack>
                <ScrollArrow aria-label="向左"><Caret $dir="left" /></ScrollArrow>
                <Thumb $share={13} />
                <Spacer />
                <ScrollArrow aria-label="向右"><Caret $dir="right" /></ScrollArrow>
              </HTrack>
              <HSplit />
            </HScroll>
          </SheetBar>
        </Editor>
        <SelectionPane />
        <Rail />
      </Workspace>
      <Status />
      <ImeBadge>CH<Icon w={12}><path d="M6 .500q5.500 1 5 6-1 5-6 5-3 0-4.500-2 7-1 5.500-9z" /></Icon>简</ImeBadge>
      <SiteMark>
        <Icon w={44} h={40}>
          <defs>
            <linearGradient id="sky" x1="0" y1="1" x2="1" y2="0"><stop offset="0" stopColor="#3f7fd0" /><stop offset="1" stopColor="#5cc8f2" /></linearGradient>
            <linearGradient id="leaf" x1="0" y1="1" x2="1" y2="0"><stop offset="0" stopColor="#f0e040" /><stop offset=".5" stopColor="#6cc04a" /><stop offset="1" stopColor="#38b48a" /></linearGradient>
          </defs>
          <path stroke="none" fill="url(#sky)" d="M43 0Q14 0 3 16-3 27 6 31q5 2 12-2-8 0-7-7Q14 8 43 0z" />
          <path stroke="none" fill="url(#leaf)" d="M22 14q19-4 20 8Q41 38 3 39q21-4 25-14 2-7-6-11z" />
          <path stroke="none" fill="#4a90d9" d="M37 5Q17 11 15 19q0 5 10 6-5-10 12-20z" />
        </Icon>
        <SiteText>极光下载站<SiteUrl>www.xz7.com</SiteUrl></SiteText>
      </SiteMark>
    </Shell>
  );
}
